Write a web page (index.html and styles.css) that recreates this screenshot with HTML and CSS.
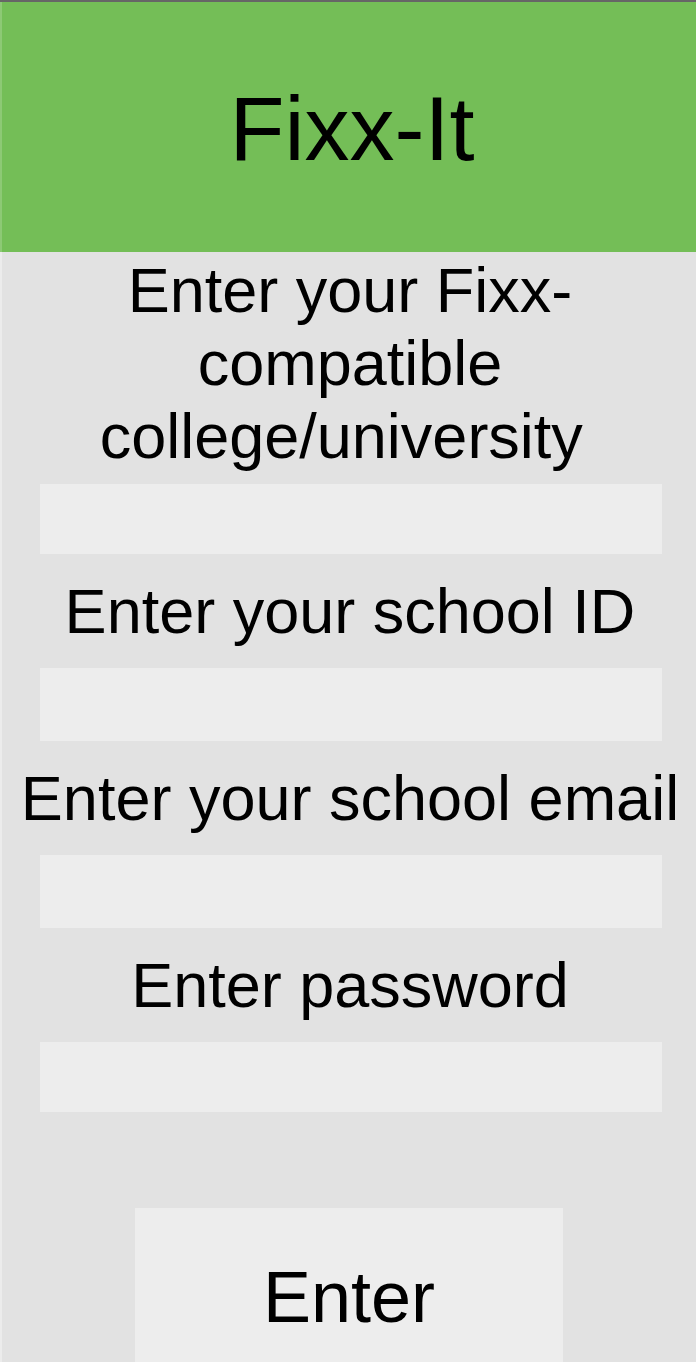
FILE: index.html
```html
<!DOCTYPE html>
<html lang="en">
<head>
<meta charset="utf-8">
<title>Fixx-It</title>
<link rel="stylesheet" href="styles.css">
</head>
<body>
<div class="page">
  <header class="header">
    <h1 class="title">Fixx-It</h1>
  </header>
  <main class="form">
    <label class="label label-first">Enter your Fixx-compatible college/university&nbsp;</label>
    <div class="field field-first"></div>
    <label class="label">Enter your school ID</label>
    <div class="field field-tall"></div>
    <label class="label">Enter your school email</label>
    <div class="field field-tall"></div>
    <label class="label">Enter password</label>
    <div class="field"></div>
    <button class="button" type="button">Enter</button>
  </main>
</div>
</body>
</html>
```

FILE: styles.css
```css
html, body {
  margin: 0;
  padding: 0;
  height: 100%;
  overflow: hidden;
  background: #e2e2e2;
}

body {
  font-family: "Liberation Sans", Arial, sans-serif;
  color: #000;
}

.page {
  display: flex;
  flex-direction: column;
  min-height: 100%;
  border-top: 2px solid #666666;
  box-sizing: border-box;
}

.header {
  height: 250px;
  background: #74be57;
  border-left: 2px solid rgba(255, 255, 255, 0.18);
  display: flex;
  align-items: center;
  justify-content: center;
}

.title {
  margin: 0;
  font-size: 90px;
  font-weight: 400;
  line-height: 1;
  padding-top: 4px;
  padding-left: 6px;
}

.form {
  flex: 1;
  display: flex;
  flex-direction: column;
  border-left: 2px solid rgba(255, 255, 255, 0.35);
  padding-left: 2px;
}

.label {
  display: block;
  text-align: center;
  font-size: 63px;
  line-height: 72px;
  margin-top: 21px;
}

.label-first {
  margin-top: 2px;
  line-height: 73px;
  padding: 0 10px;
}

.field {
  height: 70px;
  margin: 21px 34px 0 36px;
  background: #ededed;
}

.field-first {
  margin-top: 11px;
}

.field-tall {
  height: 73px;
}

.button {
  display: block;
  align-self: center;
  width: 428px;
  margin-top: 96px;
  margin-left: -2px;
  padding: 48px 0;
  border: none;
  background: #ededed;
  font-family: "Liberation Sans", Arial, sans-serif;
  font-size: 72px;
  line-height: 82px;
  color: #000;
}
```
